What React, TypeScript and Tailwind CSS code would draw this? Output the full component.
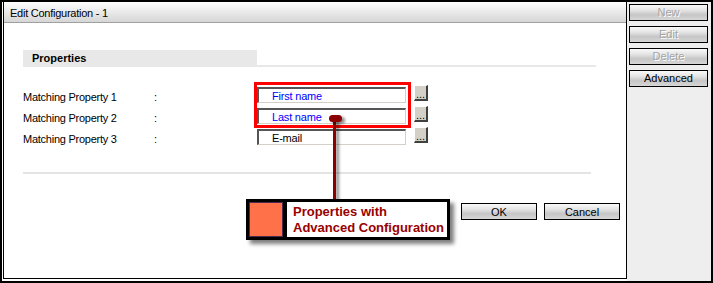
import React from 'react';

type Row = {
  label: string;
  value: string;
  blue?: boolean;
};

const rows: Row[] = [
  { label: 'Matching Property 1', value: 'First name', blue: true },
  { label: 'Matching Property 2', value: 'Last name', blue: true },
  { label: 'Matching Property 3', value: 'E-mail' },
];

function SideButton({ label, disabled }: { label: string; disabled?: boolean }) {
  return (
    <div
      className={`w-[79px] h-[17px] border border-black bg-[linear-gradient(to_bottom,#fafafa_0%,#e4e4e4_35%,#c6c6c6_65%,#d6d6d6_100%)] flex items-center justify-center leading-[15px] ${
        disabled ? 'text-[#a4a4a4] [text-shadow:1px_1px_0_#ffffff]' : 'text-black'
      }`}
    >
      {label}
    </div>
  );
}

function DialogButton({ label }: { label: string }) {
  return (
    <div className="w-[76px] h-[17px] border border-black bg-[linear-gradient(to_bottom,#fafafa_0%,#e4e4e4_35%,#c6c6c6_65%,#d6d6d6_100%)] flex items-center justify-center leading-[15px] pt-[1px]">
      {label}
    </div>
  );
}

function PropertyRow({ row }: { row: Row }) {
  return (
    <div className="flex items-start h-[16px]">
      <div className="w-[131px] leading-[16px] pt-[2px] tracking-[-0.25px] whitespace-nowrap">{row.label}</div>
      <div className="w-[103px] leading-[16px] pt-[2px]">:</div>
      <div className="w-[149px] h-[16px] border-t-2 border-l-2 border-t-[#555555] border-l-[#555555] border-r border-b border-r-[#d4d0c8] border-b-[#d4d0c8] bg-white pl-[13px] leading-[14px] tracking-[-0.2px]">
        <span className={row.blue ? 'text-[#0000ff]' : 'text-black'}>{row.value}</span>
      </div>
      <div className="ml-[8px] -mt-[2px] w-[14px] h-[16px] bg-[#d4d0c8] border-t border-l border-t-white border-l-white border-r-2 border-b-2 border-r-[#404040] border-b-[#404040] flex items-end justify-center leading-[10px] text-[11px]">
        ...
      </div>
    </div>
  );
}

export default function App() {
  return (
    <div className="relative w-[713px] h-[283px] border-2 border-black bg-[#eeeeee] flex overflow-hidden font-['Liberation_Sans',Arial,sans-serif] text-[11px] text-black">
      <div className="w-[625px] h-full bg-white pl-[1px]">
        <div className="w-[624px] h-[277px] border-x border-b border-black flex flex-col">
          <div className="h-[21px] border-b border-[#a0a0a0] bg-[linear-gradient(to_bottom,#fdfdfd,#d6d6d6)] pl-[6px] pt-[2px] leading-[18px] tracking-[-0.25px]">
            Edit Configuration - 1
          </div>
          <div className="pl-[19px] flex flex-col">
            <div className="mt-[27px] w-[573px] flex items-end">
              <div className="w-[234px] h-[17px] bg-[#e8e8e8] pl-[9px] leading-[17px] font-bold">Properties</div>
              <div className="flex-1 h-[2px] bg-[#e8e8e8]" />
            </div>
            <div className="mt-[20px] flex flex-col gap-[5px]">
              {rows.map((row) => (
                <PropertyRow key={row.label} row={row} />
              ))}
            </div>
            <div className="mt-[27px] w-[568px] h-[2px] bg-[#e4e4e4]" />
          </div>
          <div className="mt-[29px] flex justify-end gap-[7px] pr-[6px]">
            <DialogButton label="OK" />
            <DialogButton label="Cancel" />
          </div>
        </div>
      </div>
      <div className="flex-1 flex flex-col gap-[5px] pl-[2px] pt-[2px]">
        <SideButton label="New" disabled />
        <SideButton label="Edit" disabled />
        <SideButton label="Delete" disabled />
        <SideButton label="Advanced" />
      </div>

      {/* annotation */}
      <div className="absolute left-[252px] top-[80px] w-[157px] h-[46px] border-[3px] border-[#ff0000]" />
      <div className="absolute left-[331px] top-[117px] w-[3px] h-[82px] bg-[#8b0000] shadow-[3px_2px_3px_rgba(0,0,0,0.45)]" />
      <div className="absolute left-[327px] top-[113px] w-[13px] h-[7px] rounded-full bg-[#8b0000] shadow-[3px_2px_3px_rgba(0,0,0,0.45)]" />
      <div className="absolute left-[244px] top-[197px] w-[204px] h-[41px] bg-black p-[3px] flex gap-[4px] shadow-[4px_4px_4px_rgba(0,0,0,0.5)]">
        <div className="w-[34px] h-[35px] bg-[#ff7149] border border-[#4b2a4b]" />
        <div className="flex-1 bg-white pl-[6px] pt-[2px] text-[13px] leading-[15.5px] font-bold text-[#990000] whitespace-nowrap">
          Properties with
          <br />
          Advanced Configuration
        </div>
      </div>
    </div>
  );
}
